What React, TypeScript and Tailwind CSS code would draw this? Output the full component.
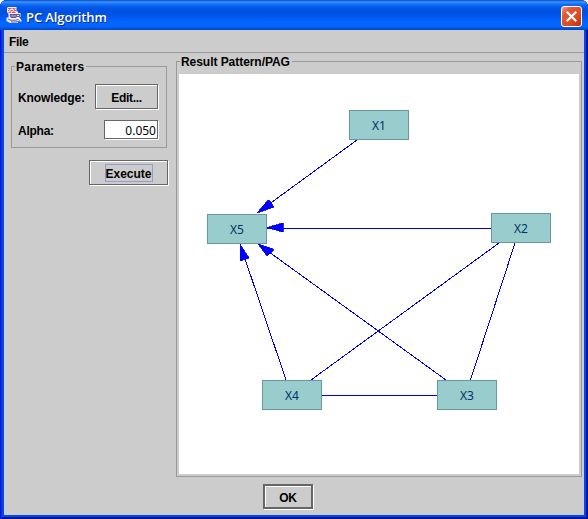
import React from "react";

const nodes = [
  { name: "X1", x: 170, y: 36 },
  { name: "X2", x: 312, y: 139 },
  { name: "X3", x: 258, y: 306 },
  { name: "X4", x: 83, y: 306 },
  { name: "X5", x: 28, y: 140 },
];

const edges = [
  [178, 66, 78, 139],
  [312, 154.5, 88, 154.5],
  [107, 306, 61, 170],
  [267, 306, 79, 170],
  [320, 169, 132, 306],
  [336, 169, 291.5, 306],
  [143, 321.5, 258, 321.5],
];

const arrows = [
  "78,139 89,126 91,127 95,133",
  "88,153.5 104,149 104,158",
  "61,170 61,187 70,184",
  "79,170 94,175 94,177 88,182",
];

const legend = "absolute top-[-7px] bg-[#cccccc] pl-px pr-[2px] leading-[14px]";
const raised = "flex items-center justify-center border border-[#666666] shadow-[inset_1px_1px_0_#ffffff,1px_1px_0_#ffffff]";

function JavaIcon() {
  return (
    <svg className="-mt-[3px]" width="16" height="16" viewBox="0 0 16 16">
      <path d="M2 0H10.5V4.5H12V6H14.5V10H13L15.5 13V14.5H12V16H4L0.5 14V10.5H2.5V7L1 5V1Z" fill="#f3edf4" />
      <path d="M2 1.5H5.5M6.5 1.5H9.5M2 3.5H3.5M4.5 3.5H7M8 3.5H10M2.5 5.5H5M6 5.5H9.5" stroke="#e85062" strokeWidth="1" />
      <path d="M3 2.5H4M7.5 2.5H9M3.5 4.5H5M7 4.5H8.5" stroke="#ee8a98" strokeWidth="1" />
      <path d="M4 7.5H11L10 10.5H5Z" fill="#8d88b8" stroke="#5c5b99" strokeWidth="1" />
      <path d="M11 7.5H13.5V9.5H11M2 12C4 13.7 9 13.8 12.5 12.5M5 14.8C8 15.4 11 15.2 14 13.8" fill="none" stroke="#5c5b99" strokeWidth="1" />
    </svg>
  );
}

function TitleBar() {
  return (
    <header className="flex h-[30px] shrink-0 items-center bg-[linear-gradient(180deg,#0848c8_0px,#3c94ff_2px,#1673fa_4px,#0359e8_7px,#0050df_12px,#0058ee_17px,#0265ff_22px,#0366ff_26px,#0058e8_28px,#0144c8_30px)] pl-[6px] pr-[6px] pt-[3px]">
      <JavaIcon />
      <h1 className="ml-[4px] whitespace-nowrap font-['Open_Sans',sans-serif] text-[13px] font-semibold leading-[18px] tracking-[-0.1px] text-white [text-shadow:1px_1px_0_#0a2a92]">
        PC Algorithm
      </h1>
      <button aria-label="Close" className="ml-auto flex h-[21px] w-[21px] items-center justify-center rounded-[3px] border border-white bg-[linear-gradient(135deg,#f0a088_0%,#e05a38_25%,#dd4a20_65%,#b93008_100%)]">
        <svg width="13" height="13" viewBox="0 0 13 13">
          <path d="M1.7 1.7 11.3 11.3M11.3 1.7 1.7 11.3" stroke="white" strokeWidth="2.2" />
        </svg>
      </button>
    </header>
  );
}

function Graph() {
  return (
    <div className="relative h-[400px] w-[400px] bg-white">
      <svg className="absolute inset-0" width="400" height="400" shapeRendering="crispEdges">
        {edges.map(([x1, y1, x2, y2], i) => (
          <line key={i} x1={x1} y1={y1} x2={x2} y2={y2} stroke="#0000f0" strokeWidth="1" />
        ))}
        {arrows.map((points) => (
          <polygon key={points} points={points} fill="#0000ff" stroke="#0000ff" strokeWidth="0.8" />
        ))}
      </svg>
      {nodes.map((n) => (
        <div
          key={n.name}
          style={{ left: n.x, top: n.y }}
          className="absolute flex h-[30px] w-[60px] items-center justify-center border border-[#669999] bg-[#99cccc] pt-px font-['Noto_Sans',sans-serif] text-[12px] font-normal text-[#003366]"
        >
          {n.name}
        </div>
      ))}
    </div>
  );
}

export default function App() {
  return (
    <div className="h-[519px] w-[588px] bg-white font-['Liberation_Sans',Arial,sans-serif] text-[12px] font-bold text-black">
      <div className="flex h-full w-full flex-col overflow-hidden rounded-t-[7px] bg-[#0048f0] shadow-[inset_1px_0_0_#0010c8,inset_2px_0_0_#0030dc,inset_-1px_-1px_0_#001088,inset_-2px_-2px_0_#0018a8]">
        <TitleBar />
        <main className="mx-[4px] mb-[4px] flex min-h-0 flex-1 flex-col bg-[#cccccc]">
          <nav className="flex h-[23px] shrink-0 items-center border-b border-[#999999] pl-[5px] pt-px tracking-[-0.3px]">File</nav>
          <div className="flex h-[424px] shrink-0 items-start pl-[7px]">
            <div className="flex w-[165px] flex-col pt-[13px]">
              <section className="relative flex h-[82px] w-[156px] flex-col border border-[#999999] pl-[6px] pr-[8px] pt-[17px]">
                <h2 className={`${legend} left-[3px] tracking-[0.3px]`}>Parameters</h2>
                <div className="flex h-[25px] items-center justify-between">
                  <span className="pt-[2px] tracking-[-0.1px]">Knowledge:</span>
                  <button className={`${raised} h-[25px] w-[63px] pt-[2px] tracking-[-0.3px]`}>Edit...</button>
                </div>
                <div className="mt-[11px] flex h-[19px] items-center justify-between">
                  <span className="pt-[2px] tracking-[-0.25px]">Alpha:</span>
                  <span className="flex h-[19px] w-[54px] items-center justify-end border border-[#666666] bg-white pr-px pt-[2px] font-['Noto_Sans',sans-serif] text-[12px] font-normal shadow-[1px_1px_0_#ffffff]">0.050</span>
                </div>
              </section>
              <button className={`${raised} ml-[78px] mt-[12px] h-[25px] w-[79px]`}>
                <span className="flex h-[18px] w-[48px] items-center justify-center border border-[#9999cc] pt-[2px]">Execute</span>
              </button>
            </div>
            <section className="relative mt-[8px] h-[416px] w-[406px] border border-[#999999] pl-[2px] pt-[12px]">
              <h2 className={`${legend} left-[3px] whitespace-nowrap tracking-[-0.05px]`}>Result Pattern/PAG</h2>
              <Graph />
            </section>
          </div>
          <footer className="flex pl-[259px] pt-[7px]">
            <button className="flex h-[25px] w-[50px] items-center justify-center border-2 border-[#666666] pt-[2px] tracking-[-0.3px] shadow-[inset_1px_1px_0_#ffffff,1px_1px_0_#ffffff]">OK</button>
          </footer>
        </main>
      </div>
    </div>
  );
}
